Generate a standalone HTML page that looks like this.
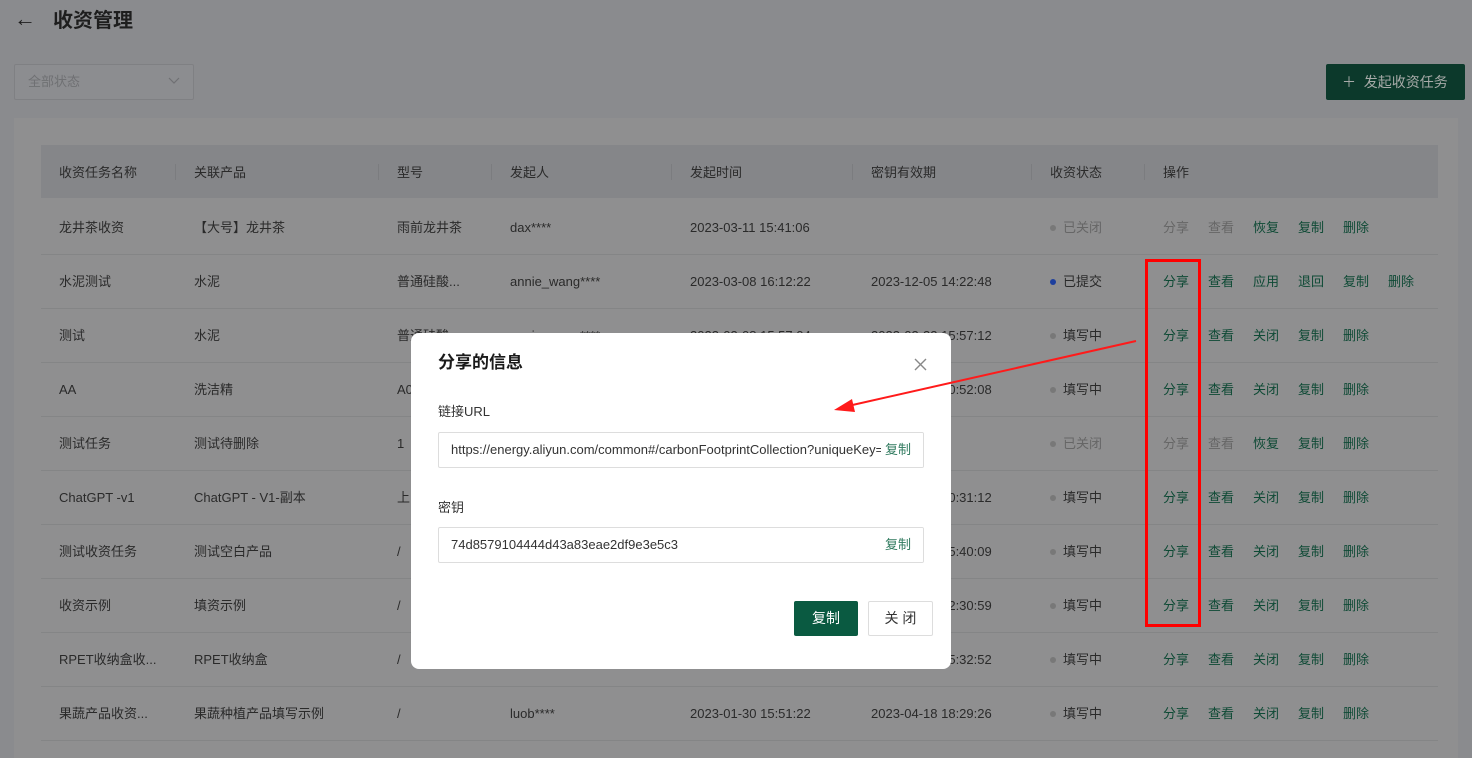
<!DOCTYPE html>
<html><head><meta charset="utf-8"><style>
*{margin:0;padding:0;box-sizing:border-box}
body{width:1472px;height:750px;overflow:hidden;background:#8a8b8e;font-family:"Liberation Sans","Noto Sans CJK SC",sans-serif;font-size:13px;line-height:20px;color:#2a2a2a;position:relative}
.a{position:absolute;white-space:nowrap;line-height:20px}
.card{position:absolute;left:14px;top:118px;width:1444px;height:640px;background:#8f8f90}
.hdr{position:absolute;left:41px;top:145px;width:1397px;height:53px;background:#858689}
.sep{position:absolute;width:1px;height:16px;top:164px;background:#7b7c7f}
.line{position:absolute;left:41px;width:1397px;height:1px;background:#848586}
.g{color:#0e4a35}.gr{color:#666}
.dot{position:absolute;width:6px;height:6px;border-radius:50%;background:#777}
.modal{position:absolute;left:411px;top:333px;width:540px;height:336px;background:#fff;border-radius:8px}
.inp{position:absolute;left:27px;width:486px;height:36px;border:1px solid #ddd;border-radius:2px;font-size:13px;color:#333;padding:0 12px;line-height:34px;overflow:hidden;white-space:nowrap}
.inp span{position:absolute;right:0;top:0;height:34px;color:#2f7a5e;background:#fff;padding:0 12px 0 4px}
</style></head><body>
<div class="a" style="left:14px;top:9px;font-size:22px;font-weight:bold;color:#1e1e1e">←</div>
<div class="a" style="left:53px;top:11px;font-size:20px;font-weight:bold;color:#1e1e1e">收资管理</div>
<div class="a" style="left:14px;top:64px;width:180px;height:36px;border:1px solid #7f8083;border-radius:2px;background:#8c8d90"></div>
<div class="a" style="left:28px;top:72px;color:#6f7073">全部状态</div>
<svg class="a" style="left:168px;top:77px" width="12" height="8"><path d="M1 1 L6 6 L11 1" stroke="#6f7073" fill="none" stroke-width="1.2"/></svg>
<div class="a" style="left:1326px;top:64px;width:139px;height:36px;background:#0c392b;border-radius:2px;color:#a7aaa8;font-size:14px;line-height:36px;padding-left:16px">＋&nbsp; 发起收资任务</div>
<div class="card"></div>
<div class="hdr"></div>
<div class="sep" style="left:175px"></div><div class="sep" style="left:378px"></div><div class="sep" style="left:491px"></div><div class="sep" style="left:671px"></div><div class="sep" style="left:852px"></div><div class="sep" style="left:1031px"></div><div class="sep" style="left:1144px"></div>
<div class="a" style="left:59px;top:163px">收资任务名称</div><div class="a" style="left:194px;top:163px">关联产品</div><div class="a" style="left:397px;top:163px">型号</div><div class="a" style="left:510px;top:163px">发起人</div><div class="a" style="left:690px;top:163px">发起时间</div><div class="a" style="left:871px;top:163px">密钥有效期</div><div class="a" style="left:1050px;top:163px">收资状态</div><div class="a" style="left:1163px;top:163px">操作</div>
<div id="rows"></div>
<script>
var R=[["龙井茶收资","【大号】龙井茶","雨前龙井茶","dax****","2023-03-11 15:41:06","","已关闭",0],
["水泥测试","水泥","普通硅酸...","annie_wang****","2023-03-08 16:12:22","2023-12-05 14:22:48","已提交",1],
["测试","水泥","普通硅酸...","annie_wang****","2023-03-08 15:57:04","2023-03-22 15:57:12","填写中",2],
["AA","洗洁精","A0","dax****","2023-03-07 10:52:00","2023-03-21 10:52:08","填写中",2],
["测试任务","测试待删除","1","dax****","2023-03-06 10:00:00","","已关闭",0],
["ChatGPT -v1","ChatGPT - V1-副本","上","dax****","2023-03-01 10:31:00","2023-03-15 10:31:12","填写中",2],
["测试收资任务","测试空白产品","/","dax****","2023-02-20 15:40:00","2023-03-06 15:40:09","填写中",2],
["收资示例","填资示例","/","dax****","2023-02-14 12:30:00","2023-02-28 12:30:59","填写中",2],
["RPET收纳盒收...","RPET收纳盒","/","dax****","2023-02-01 15:32:00","2023-02-15 15:32:52","填写中",2],
["果蔬产品收资...","果蔬种植产品填写示例","/","luob****","2023-01-30 15:51:22","2023-04-18 18:29:26","填写中",2]];
var h="",X=[59,194,397,510,690,871];
R.forEach(function(r,i){var y=218+i*54;
for(var k=0;k<6;k++)h+='<div class="a" style="left:'+X[k]+'px;top:'+y+'px">'+r[k]+'</div>';
var st=r[7];
h+='<div class="dot" style="left:1050px;top:'+(y+7)+'px;background:'+(st==1?'#1d3f9e':'#787878')+'"></div>';
h+='<div class="a" style="left:1063px;top:'+y+'px;'+(st==0?'color:#666':'')+'">'+r[6]+'</div>';
var ops=st==0?[["分享","gr"],["查看","gr"],["恢复","g"],["复制","g"],["删除","g"]]:st==1?[["分享","g"],["查看","g"],["应用","g"],["退回","g"],["复制","g"],["删除","g"]]:[["分享","g"],["查看","g"],["关闭","g"],["复制","g"],["删除","g"]];
ops.forEach(function(o,j){h+='<div class="a '+o[1]+'" style="left:'+(1163+j*45)+'px;top:'+y+'px">'+o[0]+'</div>'});
h+='<div class="line" style="top:'+(y+36)+'px"></div>';});
document.getElementById('rows').innerHTML=h;
</script>
<div class="modal">
<div class="a" style="left:27px;top:20px;font-size:17px;font-weight:bold;color:#1a1a1a">分享的信息</div>
<svg class="a" style="left:503px;top:25px" width="13" height="13"><path d="M1 1L12 12M12 1L1 12" stroke="#888" stroke-width="1.4"/></svg>
<div class="a" style="left:27px;top:69px;color:#333">链接URL</div>
<div class="inp" style="top:99px">https://energy.aliyun.com/common#/carbonFootprintCollection?uniqueKey=9f4a8c<span>复制</span></div>
<div class="a" style="left:27px;top:165px;color:#333">密钥</div>
<div class="inp" style="top:194px">74d8579104444d43a83eae2df9e3e5c3<span>复制</span></div>
<div class="a" style="left:383px;top:268px;width:64px;height:35px;background:#0a5a41;border-radius:2px;color:#fff;font-size:14px;line-height:35px;text-align:center">复制</div>
<div class="a" style="left:457px;top:268px;width:65px;height:35px;border:1px solid #ddd;border-radius:2px;color:#333;font-size:14px;line-height:33px;text-align:center">关 闭</div>
</div>
<div class="a" style="left:1145px;top:259px;width:56px;height:368px;border:3px solid #ff0000"></div>
<svg class="a" style="left:0;top:0" width="1472" height="750"><line x1="1136" y1="341" x2="848" y2="406" stroke="#ff1a1a" stroke-width="2"/><polygon points="834,410 852,399 855,412" fill="#ff1a1a"/></svg>
</body></html>
